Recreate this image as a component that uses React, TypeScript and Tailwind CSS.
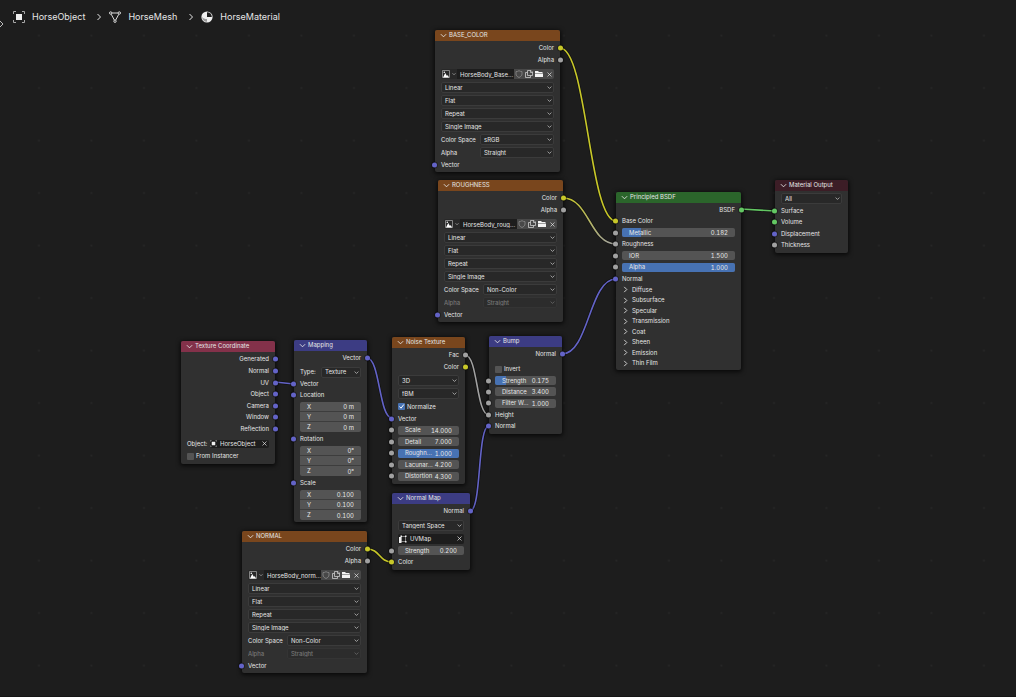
import type { ReactNode } from 'react';
import clsx from 'clsx';

type SocketColor = 'yellow' | 'gray' | 'blue' | 'green';

const SOCKET_CLASS: Record<SocketColor, string> = {
  yellow: 'bg-[#c7c729]',
  gray: 'bg-[#a1a1a1]',
  blue: 'bg-[#6363c7]',
  green: 'bg-[#63c763]',
};

const LINKS = [
  { d: 'M560 48 C587 48 589 221 616 221', color: '#c7c729' },
  { d: 'M563 198 C589 198 590 244 616 244', color: '#a1a1a1', from: '#c7c729' },
  { d: 'M562 354 C589 354 589 279 616 279', color: '#6363c7' },
  { d: 'M741 209 L775 211', color: '#63c763' },
  { d: 'M275 382 L294 384', color: '#6363c7' },
  { d: 'M367 358 C380 358 379 418 392 418', color: '#6363c7' },
  { d: 'M465 355 C478 355 476 415 489 415', color: '#a1a1a1' },
  { d: 'M470 511 C482 511 477 426 489 426', color: '#6363c7' },
  { d: 'M367 549 C380 549 379 562 392 562', color: '#c7c729' },
];

function Chevron({ dir = 'down', className }: { dir?: 'down' | 'right'; className?: string }) {
  return (
    <svg className={clsx('shrink-0', className)} viewBox="0 0 8 8" fill="none" stroke="currentColor" strokeWidth={1} aria-hidden="true">
      <path d={dir === 'down' ? 'M1 2.5 L4 5.5 L7 2.5' : 'M2.5 1 L5.5 4 L2.5 7'} />
    </svg>
  );
}

function ObjectIcon({ className }: { className?: string }) {
  return (
    <svg className={clsx('shrink-0', className)} viewBox="0 0 12 12" fill="none" stroke="#a8a8a8" aria-hidden="true">
      <path d="M.5 3V.5H3M9 .5h2.5V3M11.500 9v2.500H9M3 11.500H.5V9" />
      <rect x="3" y="3" width="6" height="6" fill="#f0f0f0" stroke="none" />
    </svg>
  );
}

function MeshIcon() {
  return (
    <svg className="size-3 shrink-0" viewBox="0 0 12 12" fill="none" stroke="#dcdcdc" strokeWidth={1} aria-hidden="true">
      <path d="M3 2h6M2.200 3.200 5.300 9M9.800 3.200 6.700 9" />
      <circle cx="1.700" cy="2" r="1.200" />
      <circle cx="10.300" cy="2" r="1.200" />
      <circle cx="6" cy="10.200" r="1.200" />
    </svg>
  );
}

function MaterialIcon() {
  return (
    <svg className="size-3 shrink-0" viewBox="0 0 12 12" aria-hidden="true">
      <circle cx="6" cy="6" r="5.600" fill="#efefef" />
      <path d="M6 6V1.200A4.800 4.800 0 0 1 10.800 6Z" fill="#1d1d1d" />
      <path d="M6 6H1.200C1.200 8.700 3.300 10.800 6 10.800Z" fill="#9a9a9a" />
      <path d="M1.200 6C2 7.500 4 8 6 8V6Z" fill="#efefef" />
    </svg>
  );
}

function Socket({ color, side }: { color: SocketColor; side: 'left' | 'right' }) {
  return (
    <span
      className={clsx(
        'absolute top-1/2 size-[5px] -translate-y-1/2 rounded-full ring-1 ring-black/30',
        SOCKET_CLASS[color],
        side === 'left' ? '-left-[3px]' : '-right-[3px]'
      )}
    />
  );
}

interface RowProps {
  h?: string;
  input?: SocketColor;
  output?: SocketColor;
  className?: string;
  children: ReactNode;
}

function Row({ h = 'h-3', input, output, className, children }: RowProps) {
  return (
    <div className={clsx('relative flex items-center px-1.5', h, output && 'justify-end', className)}>
      {input && <Socket color={input} side="left" />}
      {children}
      {output && <Socket color={output} side="right" />}
    </div>
  );
}

interface NodeProps {
  title: string;
  header: string;
  position: string;
  width: string;
  children: ReactNode;
}

function Node({ title, header, position, width, children }: NodeProps) {
  return (
    <section
      aria-label={title}
      className={clsx('absolute rounded-[2px] bg-[#303030] pb-0.5 shadow-[0_1px_4px_1px_rgba(0,0,0,0.7)]', position, width)}
    >
      <button type="button" className={clsx('mb-px flex h-[11px] w-full items-center gap-[2px] rounded-t-[2px] pb-px pl-[5px]', header)}>
        <Chevron className="size-[7px]" />
        <span>{title}</span>
      </button>
      {children}
    </section>
  );
}

function Dropdown({ value, label, disabled }: { value: string; label: string; disabled?: boolean }) {
  return (
    <span className={clsx('relative flex h-[11px] min-w-0 flex-1 items-center', disabled && 'opacity-40')}>
      <select
        aria-label={label}
        disabled={disabled}
        className="h-full w-full appearance-none rounded-[2px] border border-[#3b3b3b] bg-[#282828] pl-[3px] leading-none"
      >
        <option>{value}</option>
      </select>
      <Chevron className="pointer-events-none absolute right-[2px] size-[5px]" />
    </span>
  );
}

function LabeledDropdown({ label, value, disabled }: { label: string; value: string; disabled?: boolean }) {
  return (
    <Row h="h-[13px]">
      <span className={clsx('w-[39px]', disabled && 'opacity-40')}>{label}</span>
      <Dropdown label={label} value={value} disabled={disabled} />
    </Row>
  );
}

interface NumberFieldProps {
  label: string;
  value: string;
  fill?: number;
}

function NumberField({ label, value, fill = 0 }: NumberFieldProps) {
  return (
    <label className="relative flex h-[9px] min-w-0 flex-1 items-center overflow-hidden rounded-[2px] bg-[#545454] px-[7px]">
      <span className="absolute inset-y-0 left-0 bg-[#4772b3]" style={{ width: `${fill * 100}%` }} />
      <span className="relative whitespace-nowrap">{label}</span>
      <input type="text" defaultValue={value} className="relative h-full w-0 min-w-0 flex-1 text-right leading-none tabular-nums" />
    </label>
  );
}

function VectorGroup({ name, values }: { name: string; values: string[] }) {
  return (
    <div className="mx-1.5 mt-px overflow-hidden rounded-[2px]">
      {['X', 'Y', 'Z'].map((axis, i) => (
        <label key={axis} className="flex h-[10px] items-center border-b border-[#3d3d3d] bg-[#545454] px-[7px] last:border-b-0">
          <span>{axis}</span>
          <input
            type="text"
            aria-label={`${name} ${axis}`}
            defaultValue={values[i]}
            className="h-full w-0 min-w-0 flex-1 text-right leading-none tabular-nums"
          />
        </label>
      ))}
    </div>
  );
}

function Checkbox({ label, checked }: { label: string; checked?: boolean }) {
  return (
    <label className="flex items-center gap-[2px]">
      <span className="relative flex size-[7px]">
        <input
          type="checkbox"
          defaultChecked={checked}
          className="peer size-[7px] appearance-none rounded-[1px] bg-[#545454] checked:bg-[#4772b3]"
        />
        <svg className="pointer-events-none absolute inset-0 hidden size-[7px] peer-checked:block" viewBox="0 0 7 7" fill="none" stroke="#fff">
          <path d="M1.500 3.500 3 5.200 5.800 1.500" />
        </svg>
      </span>
      {label}
    </label>
  );
}

function ClearButton({ label }: { label: string }) {
  return (
    <button type="button" aria-label={label} className="flex h-full w-[10px] items-center justify-center">
      <svg className="size-[5px]" viewBox="0 0 5 5" stroke="currentColor" strokeWidth={0.7} aria-hidden="true">
        <path d="M.5 .5l4 4M4.500 .5l-4 4" />
      </svg>
    </button>
  );
}

function ImagePicker({ file }: { file: string }) {
  const toolClass = 'flex h-[10px] w-[10px] items-center justify-center bg-[#484848]';
  return (
    <Row h="h-[14px]" className="mt-px">
      <div className="flex h-[10px] flex-1 items-center">
        <button type="button" aria-label="Browse image" className="flex h-full w-4 items-center gap-[2px] rounded-l-[2px] bg-[#282828] pl-px">
          <svg className="size-2" viewBox="0 0 8 8" aria-hidden="true">
            <path d="M.5 .5h7v7h-7z" fill="none" stroke="#9c9c9c" strokeWidth={0.8} />
            <path d="M1 7.500 3.200 3 5 6l.8-1L7 7.500Z" fill="#fff" />
            <circle cx="2.300" cy="2.200" r=".8" fill="#fff" />
          </svg>
          <Chevron className="size-1" />
        </button>
        <input aria-label="Image name" type="text" defaultValue={file} className="h-full w-0 min-w-0 flex-1 bg-[#1d1d1d] pl-[3px] leading-none" />
        <button type="button" aria-label="Fake user" className={toolClass}>
          <svg className="size-2" viewBox="0 0 8 8" fill="none" stroke="#8c8c8c" strokeWidth={0.8} aria-hidden="true">
            <path d="M4 .7C3 1.400 2 1.600 1 1.600V4c0 1.700 1.500 2.800 3 3.500C5.500 6.800 7 5.700 7 4V1.600C6 1.600 5 1.400 4 .7Z" />
          </svg>
        </button>
        <button type="button" aria-label="New image" className={toolClass}>
          <svg className="size-2" viewBox="0 0 8 8" fill="none" stroke="#ccc" strokeWidth={0.8} aria-hidden="true">
            <path d="M2.500 .5H6L7.500 2v3.500h-5ZM5.500 .5v2h2M2.500 2.500h-2v5h5v-2" />
          </svg>
        </button>
        <button type="button" aria-label="Open image" className={toolClass}>
          <svg className="size-2" viewBox="0 0 8 8" fill="#f4f4f4" aria-hidden="true">
            <path d="M0 1h3l1 1h3.500v1H0ZM0 3.500h8V7H0Z" />
          </svg>
        </button>
        <span className="flex h-[10px] w-[10px] rounded-r-[2px] bg-[#484848]">
          <ClearButton label="Unlink image" />
        </span>
      </div>
    </Row>
  );
}

interface ImageNodeProps {
  title: string;
  file: string;
  colorSpace: string;
  position: string;
  alphaDisabled?: boolean;
}

function ImageNode({ title, file, colorSpace, position, alphaDisabled }: ImageNodeProps) {
  return (
    <Node title={title} header="bg-[#79461d]" position={position} width="w-[125px]">
      <Row output="yellow">Color</Row>
      <Row output="gray">Alpha</Row>
      <ImagePicker file={file} />
      <Row h="h-[13px]"><Dropdown label="Interpolation" value="Linear" /></Row>
      <Row h="h-[13px]"><Dropdown label="Projection" value="Flat" /></Row>
      <Row h="h-[13px]"><Dropdown label="Extension" value="Repeat" /></Row>
      <Row h="h-[13px]"><Dropdown label="Source" value="Single Image" /></Row>
      <LabeledDropdown label="Color Space" value={colorSpace} />
      <LabeledDropdown label="Alpha" value="Straight" disabled={alphaDisabled} />
      <Row h="h-[11px]" input="blue">Vector</Row>
    </Node>
  );
}

const COORD_OUTPUTS = ['Generated', 'Normal', 'UV', 'Object', 'Camera', 'Window', 'Reflection'];

function TextureCoordinateNode() {
  return (
    <Node title="Texture Coordinate" header="bg-[#83314a]" position="left-[181px] top-[341px]" width="w-[94px]">
      {COORD_OUTPUTS.map((name, i) => (
        <Row key={name} h={i === 0 || i % 2 === 1 ? 'h-3' : 'h-[11px]'} output="blue">
          {name}
        </Row>
      ))}
      <Row h="h-[13px]" className="mt-[3px]">
        <span className="w-[21px]">Object:</span>
        <span className="ml-0.5 flex h-2 min-w-0 flex-1 items-center rounded-[2px] bg-[#1d1d1d]">
          <ObjectIcon className="size-[7px]" />
          <input aria-label="Object" type="text" defaultValue="HorseObject" className="h-full w-0 min-w-0 flex-1 pl-[3px] leading-none" />
          <ClearButton label="Clear object" />
        </span>
      </Row>
      <Row><Checkbox label="From Instancer" /></Row>
    </Node>
  );
}

function MappingNode() {
  return (
    <Node title="Mapping" header="bg-[#3c3c83]" position="left-[294px] top-[340px]" width="w-[73px]">
      <Row output="blue">Vector</Row>
      <Row className="mt-0.5">
        <span className="w-[21px]">Type:</span>
        <Dropdown label="Type" value="Texture" />
      </Row>
      <Row h="h-[11px]" input="blue">Vector</Row>
      <Row input="blue">Location</Row>
      <VectorGroup name="Location" values={['0 m', '0 m', '0 m']} />
      <Row input="blue" className="mt-px">Rotation</Row>
      <VectorGroup name="Rotation" values={['0°', '0°', '0°']} />
      <Row input="blue" className="mt-px">Scale</Row>
      <VectorGroup name="Scale" values={['0.100', '0.100', '0.100']} />
    </Node>
  );
}

function NoiseTextureNode() {
  return (
    <Node title="Noise Texture" header="bg-[#79461d]" position="left-[392px] top-[337px]" width="w-[73px]">
      <Row output="gray">Fac</Row>
      <Row h="h-[11px]" output="yellow">Color</Row>
      <Row h="h-[13px]" className="mt-0.5"><Dropdown label="Dimensions" value="3D" /></Row>
      <Row h="h-[13px]"><Dropdown label="Noise type" value="fBM" /></Row>
      <Row h="h-[13px]"><Checkbox label="Normalize" checked /></Row>
      <Row h="h-[11px]" input="blue">Vector</Row>
      <Row input="gray"><NumberField label="Scale" value="14.000" /></Row>
      <Row h="h-[11px]" input="gray"><NumberField label="Detail" value="7.000" /></Row>
      <Row input="gray"><NumberField label="Roughn..." value="1.000" fill={1} /></Row>
      <Row h="h-[11px]" input="gray"><NumberField label="Lacunar..." value="4.200" /></Row>
      <Row input="gray"><NumberField label="Distortion" value="4.300" /></Row>
    </Node>
  );
}

function BumpNode() {
  return (
    <Node title="Bump" header="bg-[#3c3c83]" position="left-[489px] top-[336px]" width="w-[73px]">
      <Row output="blue">Normal</Row>
      <Row className="mt-[3px]"><Checkbox label="Invert" /></Row>
      <Row h="h-[11px]" input="gray"><NumberField label="Strength" value="0.175" fill={0.175} /></Row>
      <Row h="h-[11px]" input="gray"><NumberField label="Distance" value="3.400" /></Row>
      <Row input="gray"><NumberField label="Filter W..." value="1.000" /></Row>
      <Row h="h-[11px]" input="gray">Height</Row>
      <Row input="blue">Normal</Row>
    </Node>
  );
}

function NormalMapNode() {
  return (
    <Node title="Normal Map" header="bg-[#3c3c83]" position="left-[392px] top-[493px]" width="w-[78px]">
      <Row output="blue">Normal</Row>
      <Row h="h-[13px]" className="mt-0.5"><Dropdown label="Space" value="Tangent Space" /></Row>
      <Row h="h-[13px]">
        <span className="flex h-[10px] min-w-0 flex-1 items-center rounded-[2px] bg-[#1d1d1d] pl-px">
          <svg className="size-2 shrink-0" viewBox="0 0 8 8" aria-hidden="true">
            <path d="M2 1.500h4.500v5H2z" fill="none" stroke="#aaa" strokeWidth={0.7} />
            <path d="M0 2h2.500v6H0zM1.500 0.500h1.500v1.500H1.500zM6 .5h1.500V2H6zM6 6h1.500v1.500H6z" fill="#f0f0f0" />
          </svg>
          <input aria-label="UV map" type="text" defaultValue="UVMap" className="h-full w-0 min-w-0 flex-1 pl-[3px] leading-none" />
          <ClearButton label="Clear UV map" />
        </span>
      </Row>
      <Row h="h-[11px]" input="gray"><NumberField label="Strength" value="0.200" /></Row>
      <Row input="yellow">Color</Row>
    </Node>
  );
}

const BSDF_PANELS = ['Diffuse', 'Subsurface', 'Specular', 'Transmission', 'Coat', 'Sheen', 'Emission', 'Thin Film'];

function PrincipledNode() {
  return (
    <Node title="Principled BSDF" header="bg-[#2b652b]" position="left-[616px] top-[192px]" width="w-[125px]">
      <Row h="h-[11px]" output="green">BSDF</Row>
      <Row input="yellow">Base Color</Row>
      <Row h="h-[11px]" input="gray"><NumberField label="Metallic" value="0.182" fill={0.17} /></Row>
      <Row input="gray">Roughness</Row>
      <Row h="h-[11px]" input="gray"><NumberField label="IOR" value="1.500" /></Row>
      <Row input="gray"><NumberField label="Alpha" value="1.000" fill={1} /></Row>
      <Row h="h-[11px]" input="blue">Normal</Row>
      {BSDF_PANELS.map((name, i) => (
        <button
          key={name}
          type="button"
          className={clsx('flex w-full items-center gap-[3px] pl-1.5', i % 2 === 0 ? 'h-[11px]' : 'h-[10px]')}
        >
          <Chevron dir="right" className="size-[7px]" />
          {name}
        </button>
      ))}
    </Node>
  );
}

function MaterialOutputNode() {
  return (
    <Node title="Material Output" header="bg-[#3c1d26]" position="left-[775px] top-[180px]" width="w-[73px]">
      <Row h="h-[13px]"><Dropdown label="Target" value="All" /></Row>
      <Row h="h-[11px]" input="green">Surface</Row>
      <Row input="green">Volume</Row>
      <Row h="h-[11px]" input="blue">Displacement</Row>
      <Row input="gray">Thickness</Row>
    </Node>
  );
}

function Breadcrumb() {
  return (
    <nav aria-label="Context path" className="relative flex h-[33px] items-center pl-[13px] text-[9px]">
      <a href="#object" className="flex items-center gap-[7px]">
        <ObjectIcon className="size-3" />
        HorseObject
      </a>
      <Chevron dir="right" className="mr-1.5 ml-[10px] size-2" />
      <a href="#mesh" className="flex items-center gap-[7px]">
        <MeshIcon />
        HorseMesh
      </a>
      <Chevron dir="right" className="mr-1.5 ml-[10px] size-2" />
      <a href="#material" className="flex items-center gap-[7px]">
        <MaterialIcon />
        HorseMaterial
      </a>
      <button type="button" aria-label="Show toolbar" className="absolute top-5 left-0">
        <svg className="h-2 w-1" viewBox="0 0 4 8" fill="none" stroke="#bbb" aria-hidden="true">
          <path d="M0 1 3 4 0 7" />
        </svg>
      </button>
    </nav>
  );
}

function App() {
  return (
    <main className="relative min-h-screen overflow-hidden border-b border-[#151515] bg-[#1d1d1d] font-[Inter,sans-serif] text-[6px] leading-none text-[#e6e6e6]">
      <svg className="absolute inset-0 h-full w-full" fill="none" aria-hidden="true">
        <defs>
          <pattern id="grid" x="13" y="9" width="52.5" height="52.5" patternUnits="userSpaceOnUse">
            <circle cx="26" cy="26.500" r="1" fill="#272727" />
          </pattern>
          <linearGradient id="color-to-value" gradientUnits="userSpaceOnUse" x1="563" y1="198" x2="616" y2="244">
            <stop stopColor="#c7c729" />
            <stop offset="1" stopColor="#a1a1a1" />
          </linearGradient>
        </defs>
        <rect width="100%" height="100%" fill="url(#grid)" />
        {LINKS.map((link) => (
          <g key={link.d}>
            <path d={link.d} stroke="#111" strokeWidth={3} />
            <path d={link.d} stroke={link.from ? 'url(#color-to-value)' : link.color} strokeWidth={1.6} />
          </g>
        ))}
      </svg>
      <Breadcrumb />
      <ImageNode title="BASE_COLOR" file="HorseBody_Base..." colorSpace="sRGB" position="left-[435px] top-[30px]" />
      <ImageNode title="ROUGHNESS" file="HorseBody_roug..." colorSpace="Non-Color" position="left-[438px] top-[180px]" alphaDisabled />
      <ImageNode title="NORMAL" file="HorseBody_norm..." colorSpace="Non-Color" position="left-[242px] top-[531px]" alphaDisabled />
      <TextureCoordinateNode />
      <MappingNode />
      <NoiseTextureNode />
      <BumpNode />
      <NormalMapNode />
      <PrincipledNode />
      <MaterialOutputNode />
    </main>
  );
}

export default App;
